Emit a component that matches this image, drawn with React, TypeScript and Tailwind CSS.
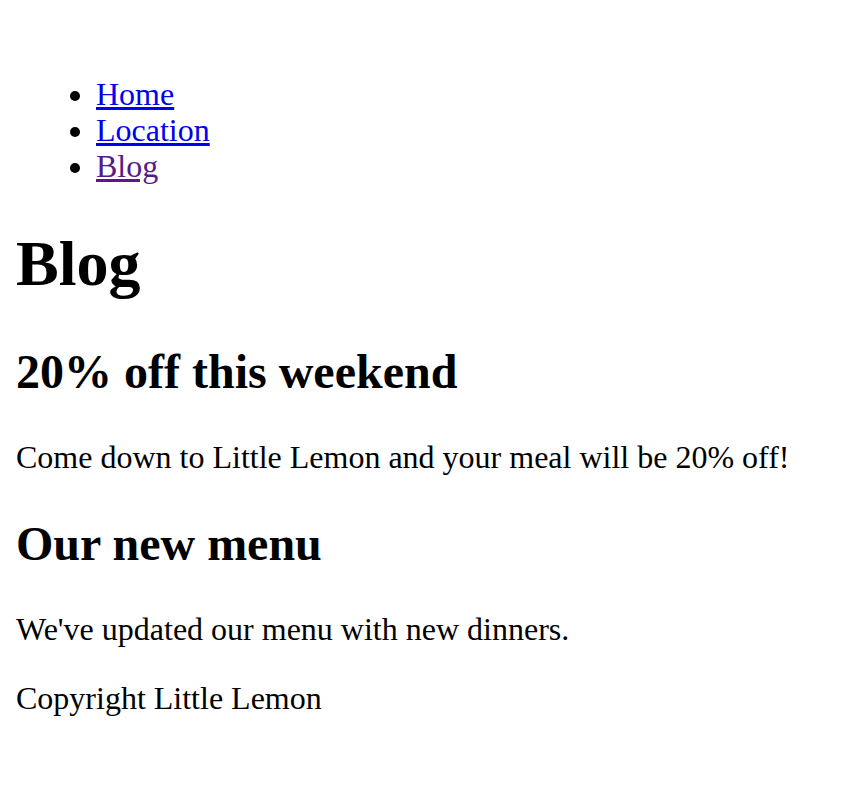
const links = [
  { label: 'Home', href: '#home', visited: false },
  { label: 'Location', href: '#location', visited: false },
  { label: 'Blog', href: '#blog', visited: true },
]

const posts = [
  { title: '20% off this weekend', text: 'Come down to Little Lemon and your meal will be 20% off!' },
  { title: 'Our new menu', text: "We've updated our menu with new dinners." },
]

export default function App() {
  return (
    <div className="min-h-[800px] bg-white px-4 pt-[44px] pb-4 text-black text-[32px] leading-[normal] font-['Liberation_Serif','Times_New_Roman',serif]">
      <nav>
        <ul className="list-disc pl-[80px] my-[32px] leading-[36px]">
          {links.map((link) => (
            <li key={link.label}>
              <a
                href={link.href}
                className={link.visited ? 'underline text-[#551a8b]' : 'underline text-[#0000ee]'}
              >
                {link.label}
              </a>
            </li>
          ))}
        </ul>
      </nav>

      <h1 className="text-[64px] font-bold leading-[normal] my-[43px]">Blog</h1>

      {posts.map((post) => (
        <article key={post.title}>
          <h2 className="text-[48px] font-bold leading-[normal] my-[40px]">{post.title}</h2>
          <p className="my-[32px]">{post.text}</p>
        </article>
      ))}

      <footer>
        <p className="my-[32px]">Copyright Little Lemon</p>
      </footer>
    </div>
  )
}
